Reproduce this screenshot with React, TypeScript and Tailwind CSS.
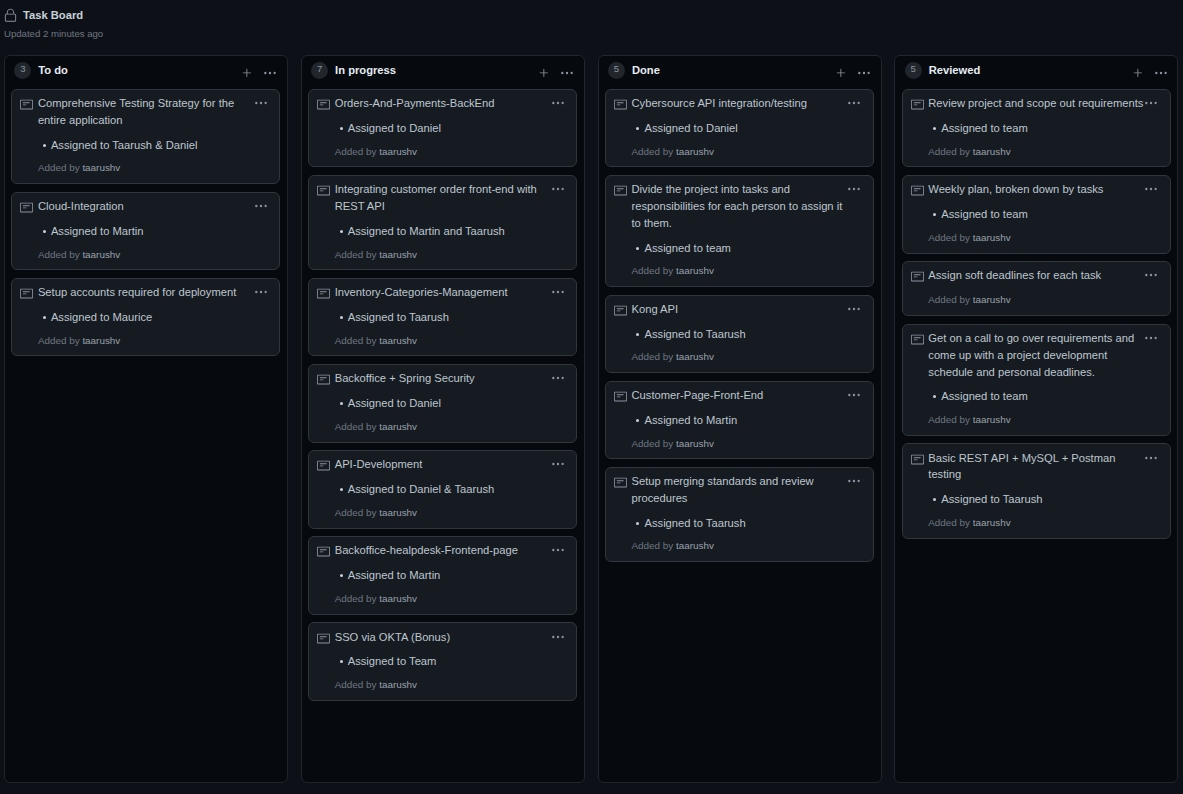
import { GoKebabHorizontal, GoLock, GoNote, GoPlus } from "react-icons/go";

type Card = { title: string; note?: string };
type Column = { name: string; cards: Card[] };

const columns: Column[] = [
  {
    name: "To do",
    cards: [
      { title: "Comprehensive Testing Strategy for the entire application", note: "Assigned to Taarush & Daniel" },
      { title: "Cloud-Integration", note: "Assigned to Martin" },
      { title: "Setup accounts required for deployment", note: "Assigned to Maurice" },
    ],
  },
  {
    name: "In progress",
    cards: [
      { title: "Orders-And-Payments-BackEnd", note: "Assigned to Daniel" },
      { title: "Integrating customer order front-end with REST API", note: "Assigned to Martin and Taarush" },
      { title: "Inventory-Categories-Management", note: "Assigned to Taarush" },
      { title: "Backoffice + Spring Security", note: "Assigned to Daniel" },
      { title: "API-Development", note: "Assigned to Daniel & Taarush" },
      { title: "Backoffice-healpdesk-Frontend-page", note: "Assigned to Martin" },
      { title: "SSO via OKTA (Bonus)", note: "Assigned to Team" },
    ],
  },
  {
    name: "Done",
    cards: [
      { title: "Cybersource API integration/testing", note: "Assigned to Daniel" },
      { title: "Divide the project into tasks and responsibilities for each person to assign it to them.", note: "Assigned to team" },
      { title: "Kong API", note: "Assigned to Taarush" },
      { title: "Customer-Page-Front-End", note: "Assigned to Martin" },
      { title: "Setup merging standards and review procedures", note: "Assigned to Taarush" },
    ],
  },
  {
    name: "Reviewed",
    cards: [
      { title: "Review project and scope out requirements", note: "Assigned to team" },
      { title: "Weekly plan, broken down by tasks", note: "Assigned to team" },
      { title: "Assign soft deadlines for each task" },
      { title: "Get on a call to go over requirements and come up with a project development schedule and personal deadlines.", note: "Assigned to team" },
      { title: "Basic REST API + MySQL + Postman testing", note: "Assigned to Taarush" },
    ],
  },
];

function TaskCard({ card }: { card: Card }) {
  return (
    <div className="flex rounded-md border border-[#30363d] bg-[#161b22] pt-[5.3px] pb-[6px] pl-2 text-[11.2px] leading-[16.8px] text-[#bec6ce]">
      <GoNote size={13} className="mt-[3px] mr-[4.6px] shrink-0 text-[#8b949e]" />
      <div className="w-[216px] shrink-0">
        <p className="mb-2">{card.title}</p>
        {card.note && (
          <ul className="mb-[6.8px] pl-[5px]">
            <li className="flex items-center gap-[5px]">
              <span className="h-[3px] w-[3px] shrink-0 rounded-full bg-[#c9d1d9]" />
              {card.note}
            </li>
          </ul>
        )}
        <p className="text-[9.9px] text-[#6e7681]">
          Added by <span className="text-[#98a1ab]">taarushv</span>
        </p>
      </div>
      <GoKebabHorizontal size={14} className="mt-[1px] shrink-0 text-[#8b949e]" />
    </div>
  );
}

function BoardColumn({ column }: { column: Column }) {
  return (
    <section className="flex w-[284px] shrink-0 flex-col rounded-md border border-[#21262d] bg-[#06090e] pr-[6.7px] pl-[6.3px]">
      <header className="flex h-[33px] shrink-0 items-start pt-[6px] pl-[3px]">
        <span className="flex h-[17px] w-[17px] items-center justify-center rounded-full bg-[#21262d] pb-[2px] text-[9.6px] text-[#8b949e]">
          {column.cards.length}
        </span>
        <h2 className="ml-[7px] flex-1 text-[11.2px] leading-[16.8px] font-bold text-[#e6edf3]">{column.name}</h2>
        <GoPlus size={14} className="mt-[4px] mr-[9px] text-[#8b949e]" />
        <GoKebabHorizontal size={14} className="mt-[4px] mr-[3px] text-[#8b949e]" />
      </header>
      <div className="flex flex-col gap-[7.6px]">
        {column.cards.map((card) => (
          <TaskCard key={card.title} card={card} />
        ))}
      </div>
    </section>
  );
}

export default function App() {
  return (
    <main className="flex h-[794px] flex-col overflow-hidden bg-[#0d1117] font-['Liberation_Sans',Arial,sans-serif]">
      <div className="h-[55px] shrink-0 pl-1">
        <div className="flex items-center pt-[7px]">
          <GoLock size={15} className="mr-[5px] ml-[-1px] text-[#8b949e]" />
          <h1 className="text-[11.2px] leading-[16.8px] font-bold text-[#c9d1d9]">Task Board</h1>
        </div>
        <p className="mt-[2px] text-[9.6px] leading-[15px] text-[#6e7681]">Updated 2 minutes ago</p>
      </div>
      <div className="flex min-h-0 flex-1 gap-[12.8px] pb-[11px] pl-1">
        {columns.map((column) => (
          <BoardColumn key={column.name} column={column} />
        ))}
      </div>
    </main>
  );
}
